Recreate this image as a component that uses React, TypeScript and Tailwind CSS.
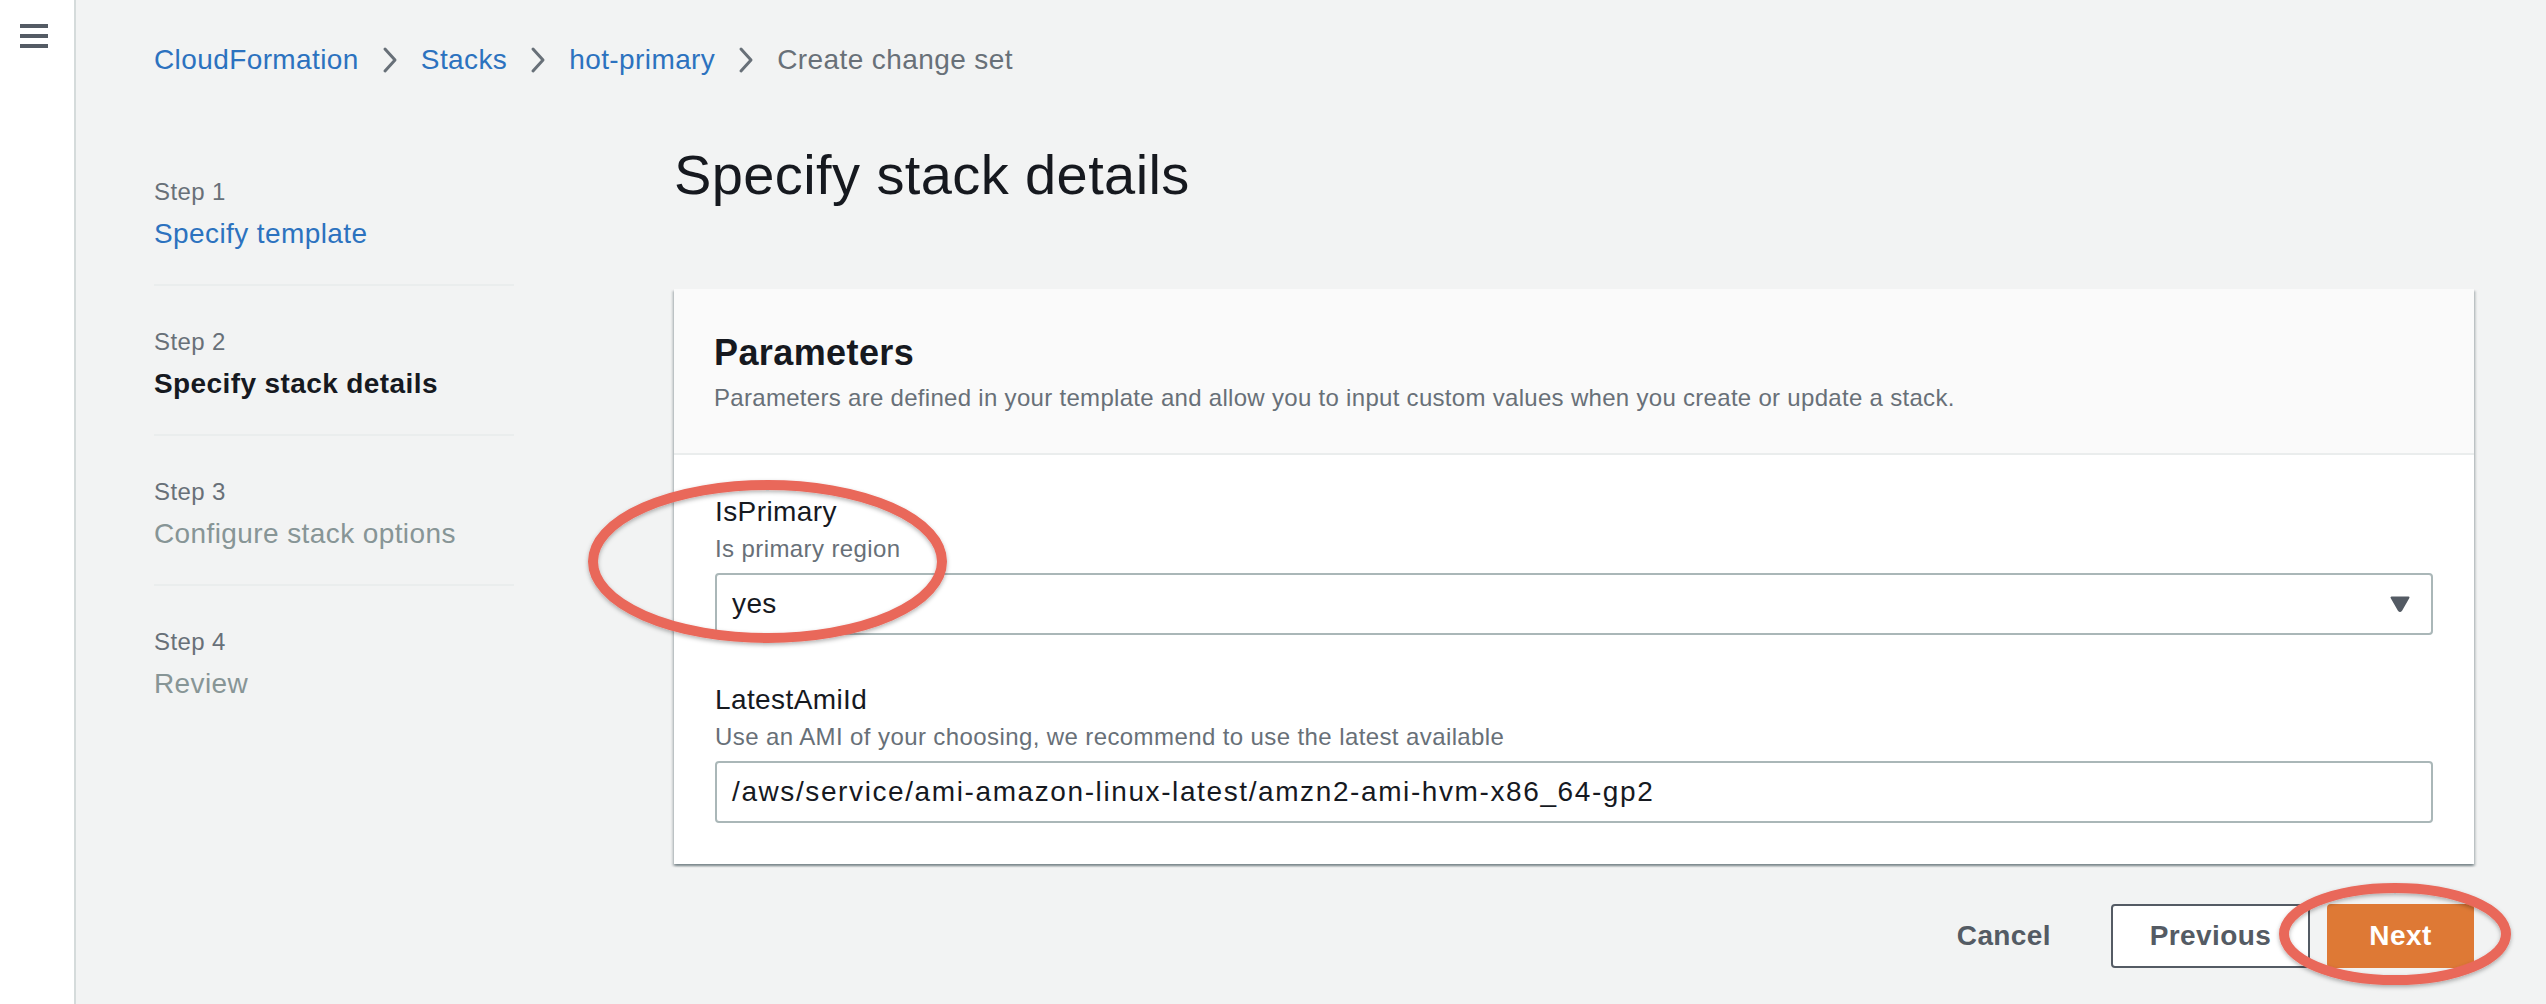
import React from 'react'

const crumbs = [
  { label: 'CloudFormation', link: true },
  { label: 'Stacks', link: true },
  { label: 'hot-primary', link: true },
  { label: 'Create change set', link: false },
]

const steps = [
  { step: 'Step 1', title: 'Specify template', state: 'done' },
  { step: 'Step 2', title: 'Specify stack details', state: 'current' },
  { step: 'Step 3', title: 'Configure stack options', state: 'todo' },
  { step: 'Step 4', title: 'Review', state: 'todo' },
]

function Chevron() {
  return (
    <svg width="18" height="28" viewBox="0 0 18 28" className="mx-[22px] shrink-0">
      <polyline points="4,3 14,14 4,25" fill="none" stroke="#687078" strokeWidth="3" strokeLinecap="round" strokeLinejoin="round" />
    </svg>
  )
}

function Field({ label, hint, children, first }: { label: string; hint: string; children: React.ReactNode; first?: boolean }) {
  return (
    <div className={first ? '' : 'mt-[45px]'}>
      <div className="text-[28px] leading-[40px] text-[#16191f]">{label}</div>
      <div className="mt-[1px] text-[24px] leading-[32px] text-[#687078]">{hint}</div>
      <div className="mt-[8px]">{children}</div>
    </div>
  )
}

export default function App() {
  return (
    <div className="relative flex h-[1004px] w-full overflow-hidden bg-[#f2f3f3] font-['Liberation_Sans',Arial,sans-serif] tracking-[0.4px]">
      {/* collapsed side navigation */}
      <div className="w-[76px] shrink-0 border-r-2 border-[#d5dbdb] bg-white">
        <svg width="28" height="24" viewBox="0 0 28 24" className="ml-[20px] mt-[24px]">
          <rect x="0" y="0" width="28" height="4" fill="#545b64" />
          <rect x="0" y="10" width="28" height="4" fill="#545b64" />
          <rect x="0" y="20" width="28" height="4" fill="#545b64" />
        </svg>
      </div>

      <div className="flex-1 pl-[78px] pr-[72px] pt-[40px]">
        {/* breadcrumbs */}
        <nav className="flex h-[40px] items-center text-[28px] leading-[40px]">
          {crumbs.map((c, i) => (
            <React.Fragment key={c.label}>
              {i > 0 && <Chevron />}
              <span className={c.link ? 'text-[#2c72bf]' : 'text-[#687078]'}>{c.label}</span>
            </React.Fragment>
          ))}
        </nav>

        <div className="mt-[63px] flex">
          {/* wizard steps */}
          <ul className="mt-[33px] w-[360px] shrink-0">
            {steps.map((s, i) => (
              <li key={s.step} className={i > 0 ? 'border-t-2 border-[#eaeded] pt-[40px]' : ''}>
                <div className="text-[24px] leading-[32px] text-[#687078]">{s.step}</div>
                <div
                  className={`mt-[6px] pb-[30px] text-[28px] leading-[40px] ${
                    s.state === 'done'
                      ? 'text-[#2c72bf]'
                      : s.state === 'current'
                      ? 'font-bold text-[#16191f]'
                      : 'text-[#879596]'
                  }`}
                >
                  {s.title}
                </div>
              </li>
            ))}
          </ul>

          {/* main form */}
          <div className="ml-[160px] flex-1">
            <h1 className="text-[56px] leading-[64px] font-normal text-[#16191f]">Specify stack details</h1>

            <section className="mt-[82px] bg-white shadow-[0_2px_2px_0_rgba(0,28,36,0.3),2px_2px_2px_0_rgba(0,28,36,0.15),-2px_2px_2px_0_rgba(0,28,36,0.15)]">
              <div className="border-b-2 border-[#eaeded] bg-[#fafafa] px-[40px] pt-[42px] pb-[39px]">
                <h2 className="text-[36px] leading-[44px] font-bold text-[#16191f]">Parameters</h2>
                <p className="mt-[7px] text-[24px] leading-[32px] tracking-[0.3px] text-[#687078]">
                  Parameters are defined in your template and allow you to input custom values when you create or update a stack.
                </p>
              </div>

              <div className="px-[41px] pt-[37px] pb-[41px]">
                <Field label="IsPrimary" hint="Is primary region" first>
                  <div className="flex h-[62px] items-center justify-between rounded-[4px] border-2 border-[#aab7b8] bg-white pl-[15px] pr-[21px]">
                    <span className="text-[28px] leading-[40px] text-[#16191f]">yes</span>
                    <svg width="20" height="16" viewBox="0 0 20 16">
                      <path d="M1.5 1.5 H18.5 L11.2 14.2 Q10 15.8 8.8 14.2 Z" fill="#545b64" stroke="#545b64" strokeWidth="2" strokeLinejoin="round" />
                    </svg>
                  </div>
                </Field>
                <Field label="LatestAmiId" hint="Use an AMI of your choosing, we recommend to use the latest available">
                  <div className="flex h-[62px] items-center rounded-[4px] border-2 border-[#aab7b8] bg-white pl-[15px]">
                    <span className="text-[28px] leading-[40px] tracking-[1.6px] text-[#16191f]">/aws/service/ami-amazon-linux-latest/amzn2-ami-hvm-x86_64-gp2</span>
                  </div>
                </Field>
              </div>
            </section>

            <div className="mt-[40px] flex items-center justify-end">
              <button className="mr-[20px] h-[64px] px-[40px] text-[28px] font-bold text-[#545b64]">Cancel</button>
              <button className="h-[64px] w-[199px] rounded-[4px] border-2 border-[#545b64] bg-white text-[28px] font-bold text-[#545b64]">
                Previous
              </button>
              <button className="ml-[17px] h-[64px] w-[147px] rounded-[4px] bg-[#de7935] text-[28px] font-bold text-white">Next</button>
            </div>
          </div>
        </div>
      </div>

      {/* red annotation ellipses drawn over the screenshot */}
      <svg className="pointer-events-none absolute left-0 top-0" width="2546" height="1004">
        <defs>
          <filter id="annoShadow" x="-10%" y="-10%" width="120%" height="130%">
            <feDropShadow dx="0" dy="2" stdDeviation="2" floodColor="#000" floodOpacity="0.3" />
          </filter>
        </defs>
        <ellipse cx="767.5" cy="561.5" rx="174.5" ry="76.5" fill="none" stroke="#e9675a" strokeWidth="10" filter="url(#annoShadow)" />
        <ellipse cx="2395" cy="934" rx="111" ry="46" fill="none" stroke="#e9675a" strokeWidth="10" filter="url(#annoShadow)" />
      </svg>
    </div>
  )
}
